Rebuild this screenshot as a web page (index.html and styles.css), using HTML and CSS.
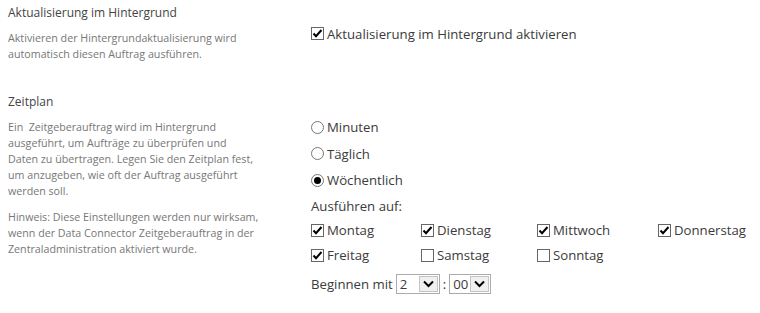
FILE: index.html
```html
<!DOCTYPE html>
<html lang="de">
<head>
    <meta charset="UTF-8">
    <title>Einstellungen</title>
    <link rel="stylesheet" href="styles.css">
</head>
<body>
    <main class="settings">
        <section class="setting">
            <div class="setting-info">
                <h3>Aktualisierung im Hintergrund</h3>
                <p>Aktivieren der Hintergrundaktualisierung wird<br>automatisch diesen Auftrag ausführen.</p>
            </div>
            <div class="setting-control top">
                <label class="check">
                    <svg class="box" width="13" height="13" viewBox="0 0 13 13"><rect x="0.5" y="0.5" width="12" height="12" fill="#fff" stroke="#666"/><path d="M2.5 6.5 L5 9.2 L10.5 3" fill="none" stroke="#000" stroke-width="2"/></svg>
                    Aktualisierung im Hintergrund aktivieren
                </label>
            </div>
        </section>

        <section class="setting">
            <div class="setting-info">
                <h3>Zeitplan</h3>
                <p>Ein &nbsp;Zeitgeberauftrag wird im Hintergrund<br>ausgeführt, um Aufträge zu überprüfen und<br>Daten zu übertragen. Legen Sie den Zeitplan fest,<br>um anzugeben, wie oft der Auftrag ausgeführt<br>werden soll.</p>
                <p>Hinweis: Diese Einstellungen werden nur wirksam,<br>wenn der Data Connector Zeitgeberauftrag in der<br>Zentraladministration aktiviert wurde.</p>
            </div>
            <div class="setting-control">
                <div class="radios">
                    <label class="radio"><span class="dot"></span>Minuten</label>
                    <label class="radio"><span class="dot"></span>Täglich</label>
                    <label class="radio selected"><span class="dot"></span>Wöchentlich</label>
                </div>
                <div class="run-on">Ausführen auf:</div>
                <div class="days">
                    <label class="check"><svg class="box" width="13" height="13" viewBox="0 0 13 13"><rect x="0.5" y="0.5" width="12" height="12" fill="#fff" stroke="#666"/><path d="M2.5 6.5 L5 9.2 L10.5 3" fill="none" stroke="#000" stroke-width="2"/></svg>Montag</label>
                    <label class="check"><svg class="box" width="13" height="13" viewBox="0 0 13 13"><rect x="0.5" y="0.5" width="12" height="12" fill="#fff" stroke="#666"/><path d="M2.5 6.5 L5 9.2 L10.5 3" fill="none" stroke="#000" stroke-width="2"/></svg>Dienstag</label>
                    <label class="check"><svg class="box" width="13" height="13" viewBox="0 0 13 13"><rect x="0.5" y="0.5" width="12" height="12" fill="#fff" stroke="#666"/><path d="M2.5 6.5 L5 9.2 L10.5 3" fill="none" stroke="#000" stroke-width="2"/></svg>Mittwoch</label>
                    <label class="check"><svg class="box" width="13" height="13" viewBox="0 0 13 13"><rect x="0.5" y="0.5" width="12" height="12" fill="#fff" stroke="#666"/><path d="M2.5 6.5 L5 9.2 L10.5 3" fill="none" stroke="#000" stroke-width="2"/></svg>Donnerstag</label>
                    <label class="check"><svg class="box" width="13" height="13" viewBox="0 0 13 13"><rect x="0.5" y="0.5" width="12" height="12" fill="#fff" stroke="#666"/><path d="M2.5 6.5 L5 9.2 L10.5 3" fill="none" stroke="#000" stroke-width="2"/></svg>Freitag</label>
                    <label class="check"><svg class="box" width="13" height="13" viewBox="0 0 13 13"><rect x="0.5" y="0.5" width="12" height="12" fill="#fff" stroke="#666"/></svg>Samstag</label>
                    <label class="check"><svg class="box" width="13" height="13" viewBox="0 0 13 13"><rect x="0.5" y="0.5" width="12" height="12" fill="#fff" stroke="#666"/></svg>Sonntag</label>
                </div>
                <div class="start">
                    Beginnen mit
                    <span class="select"><span class="value">2</span><span class="arrow"><svg width="11" height="8" viewBox="0 0 11 8"><path d="M1 1.5 L5.5 6 L10 1.5" fill="none" stroke="#000" stroke-width="2"/></svg></span></span>
                    <span class="colon">:</span>
                    <span class="select short"><span class="value">00</span><span class="arrow"><svg width="11" height="8" viewBox="0 0 11 8"><path d="M1 1.5 L5.5 6 L10 1.5" fill="none" stroke="#000" stroke-width="2"/></svg></span></span>
                </div>
            </div>
        </section>
    </main>
</body>
</html>
```

FILE: styles.css
```css
* {
    box-sizing: border-box;
}
body {
    margin: 0;
    padding: 0;
    background: #fff;
    font-family: "Open Sans", "Noto Sans", sans-serif;
    color: #444;
}

.settings {
    padding: 4px 8px;
    display: flex;
    flex-direction: column;
    gap: 21px;
}

.setting {
    display: grid;
    grid-template-columns: 303px 1fr;
}

.setting-info h3 {
    margin: 0;
    font-size: 12px;
    font-weight: 400;
    line-height: 18px;
    color: #444;
}

.setting-info p {
    margin: 8px 0 10px;
    font-size: 10.7px;
    line-height: 16px;
    color: #777;
}

.setting-control {
    padding-top: 21px;
    font-size: 13.2px;
    color: #3b3b3b;
}

.setting-control.top {
    padding-top: 17px;
}

.check {
    display: flex;
    align-items: center;
    gap: 3px;
    height: 25px;
}

.box {
    flex: none;
}

.radios {
    display: flex;
    flex-direction: column;
}

.radio {
    display: flex;
    align-items: center;
    gap: 3px;
    height: 26.5px;
}

.dot {
    width: 13px;
    height: 13px;
    border: 1px solid #777;
    border-radius: 50%;
    display: flex;
    justify-content: center;
    align-items: center;
}

.radio.selected .dot::after {
    content: "";
    width: 7px;
    height: 7px;
    border-radius: 50%;
    background: #000;
}

.run-on {
    height: 24px;
    display: flex;
    align-items: center;
}

.days {
    display: grid;
    grid-template-columns: 110px 116px 121px auto;
}

.start {
    display: flex;
    align-items: center;
    height: 32px;
}

.select {
    display: flex;
    width: 44px;
    height: 20px;
    border: 1px solid #ababab;
    margin-left: 3px;
}

.select.short {
    width: 42px;
}

.select .value {
    flex: 1;
    padding-left: 3px;
    line-height: 18px;
}

.select .arrow {
    width: 19px;
    margin: 1px;
    background: #f0f0f0;
    border: 1px solid #c4c4c4;
    display: flex;
    justify-content: center;
    align-items: center;
}

.colon {
    margin-left: 3px;
}
```
